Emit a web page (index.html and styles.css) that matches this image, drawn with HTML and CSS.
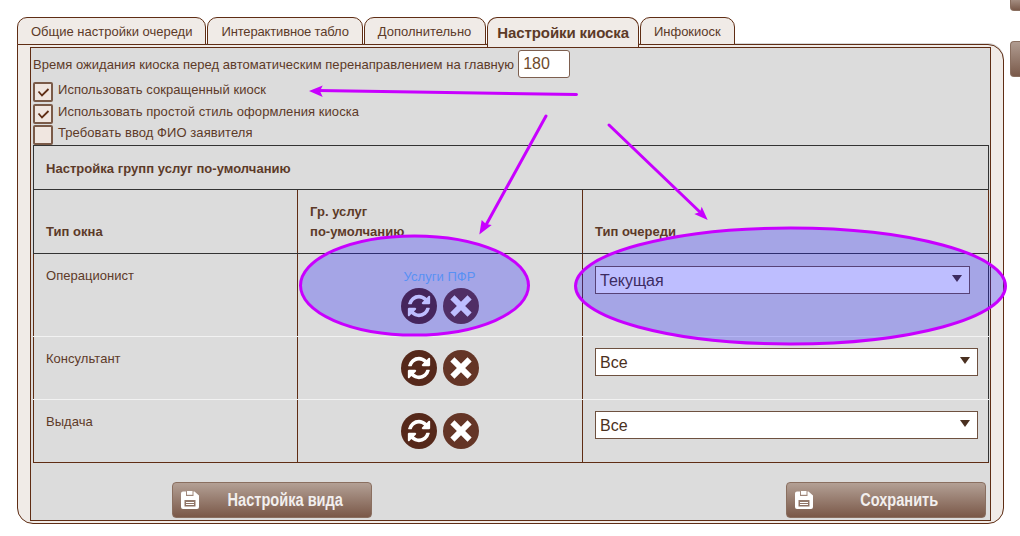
FILE: index.html
```html
<!DOCTYPE html>
<html lang="ru">
<head>
<meta charset="utf-8">
<title>Настройки киоска</title>
<link rel="stylesheet" href="styles.css">
</head>
<body>
<svg class="defs" width="0" height="0" aria-hidden="true">
  <symbol id="i-refresh" viewBox="0 0 1792 1792"><path d="M1639 1056q0 5-1 7-64 268-268 434.5t-478 166.5q-146 0-282.5-55t-243.5-157l-129 129q-19 19-45 19t-45-19-19-45v-448q0-26 19-45t45-19h448q26 0 45 19t19 45-19 45l-137 137q71 66 161 102t187 36q134 0 250-65t186-179q11-17 53-117 8-23 30-23h192q13 0 22.5 9.5t9.5 22.5zm25-800v448q0 26-19 45t-45 19h-448q-26 0-45-19t-19-45 19-45l138-138q-148-137-349-137-134 0-250 65t-186 179q-11 17-53 117-8 23-30 23h-199q-13 0-22.5-9.5t-9.5-22.5v-7q65-268 270-434.5t480-166.5q146 0 284 55.5t245 156.5l130-129q19-19 45-19t45 19 19 45z" fill="currentColor"/></symbol>
  <symbol id="i-close" viewBox="0 0 24 24"><path d="M4 7.100 7.100 4 12 8.900 16.900 4 20 7.100 15.100 12 20 16.900 16.900 20 12 15.100 7.100 20 4 16.900 8.900 12Z" fill="currentColor"/></symbol>
  <symbol id="i-save" viewBox="0 0 18 18"><path fill-rule="evenodd" d="M2 0.500h3v4.500h7.500V0.500h1L18 4.500V16a2 2 0 0 1-2 2H2a2 2 0 0 1-2-2V2.500a2 2 0 0 1 2-2ZM3.500 9v6.500h11V9ZM5 11h8v1H5Zm0 2h8v1H5Z" fill="currentColor"/><path d="M6 0h5.500v3.800H6Z" fill="currentColor"/></symbol>
</svg>

<div class="stub stub-a"></div>
<div class="stub stub-b"></div>

<main class="page">
  <nav class="tabs">
    <div class="tab">Общие настройки очереди</div>
    <div class="tab tab-tight">Интерактивное табло</div>
    <div class="tab tab-wide">Дополнительно</div>
    <div class="tab tab-active">Настройки киоска</div>
    <div class="tab">Инфокиоск</div>
  </nav>
  <section class="outer">
    <div class="inner">
      <div class="wait-row">
        <span>Время ожидания киоска перед автоматическим перенаправлением на главную</span>
        <span class="num-input">180</span>
      </div>
      <div class="check-row check-row-1"><span class="box"><svg viewBox="0 0 16 16"><path d="M3.500 7.500 7 11.500 13.500 5" fill="none" stroke="currentColor" stroke-width="1.800"/></svg></span><span>Использовать сокращенный киоск</span></div>
      <div class="check-row"><span class="box"><svg viewBox="0 0 16 16"><path d="M3.500 7.500 7 11.500 13.500 5" fill="none" stroke="currentColor" stroke-width="1.800"/></svg></span><span>Использовать простой стиль оформления киоска</span></div>
      <div class="check-row check-row-3"><span class="box"></span><span>Требовать ввод ФИО заявителя</span></div>

      <table class="grid">
        <colgroup><col class="c1"><col class="c2"><col class="c3"></colgroup>
        <thead>
          <tr class="title-row"><th colspan="3">Настройка групп услуг по-умолчанию</th></tr>
          <tr class="head-row">
            <th>Тип окна</th>
            <th>Гр. услуг<br>по-умолчанию</th>
            <th>Тип очереди</th>
          </tr>
        </thead>
        <tbody>
          <tr class="row-tall">
            <td>Операционист</td>
            <td class="mid">
              <div class="link">Услуги ПФР</div>
              <div class="icons">
                <span class="round"><svg class="ic-r"><use href="#i-refresh"/></svg></span>
                <span class="round lighter"><svg class="ic-x"><use href="#i-close"/></svg></span>
              </div>
            </td>
            <td class="sel-cell"><div class="select select-short"><span>Текущая</span><i class="caret"></i></div></td>
          </tr>
          <tr class="row">
            <td>Консультант</td>
            <td class="mid">
              <div class="icons">
                <span class="round"><svg class="ic-r"><use href="#i-refresh"/></svg></span>
                <span class="round lighter"><svg class="ic-x"><use href="#i-close"/></svg></span>
              </div>
            </td>
            <td class="sel-cell"><div class="select"><span>Все</span><i class="caret"></i></div></td>
          </tr>
          <tr class="row">
            <td>Выдача</td>
            <td class="mid">
              <div class="icons">
                <span class="round"><svg class="ic-r"><use href="#i-refresh"/></svg></span>
                <span class="round lighter"><svg class="ic-x"><use href="#i-close"/></svg></span>
              </div>
            </td>
            <td class="sel-cell"><div class="select"><span>Все</span><i class="caret"></i></div></td>
          </tr>
        </tbody>
      </table>

      <div class="actions">
        <button class="btn" type="button"><svg class="save"><use href="#i-save"/></svg><span class="btn-label"><span class="narrow">Настройка вида</span></span></button>
        <button class="btn" type="button"><svg class="save"><use href="#i-save"/></svg><span class="btn-label"><span class="narrow">Сохранить</span></span></button>
      </div>
    </div>
  </section>
</main>

<svg class="annot" viewBox="0 0 1020 536" aria-hidden="true">
  <ellipse class="oval" cx="414.500" cy="285.500" rx="114" ry="49.500"/>
  <ellipse class="oval" cx="790.500" cy="286" rx="215" ry="58"/>
  <path class="shaft" d="M576.500 94.500 318 90.500"/>
  <path class="shaft" d="M546 116 486 225"/>
  <path class="shaft" d="M609 125 702 214"/>
  <path class="head" d="M309 91 322.700 85.500 320 91 322.700 97Z"/>
  <path class="head" d="M479.300 234.500 481.700 220 486 224 491.700 225Z"/>
  <path class="head" d="M707.700 220 694.300 214 700 212 701.700 206.700Z"/>
</svg>
</body>
</html>
```
FILE: styles.css
```css
* { box-sizing: border-box; }
html, body { margin: 0; padding: 0; }
body {
  width: 1020px;
  height: 536px;
  overflow: hidden;
  background: #fff;
  font-family: "Liberation Sans", Arial, sans-serif;
  font-size: 13px;
  color: #5c3a28;
  position: relative;
}
.defs { position: absolute; }

.stub {
  position: absolute;
  left: 1010px;
  width: 10px;
  background: linear-gradient(#b09c91, #7a5a4a);
  border: 1px solid #8a6f60;
  border-right: 0;
  border-radius: 4px 0 0 4px;
}
.stub-a { top: -4px; height: 15px; }
.stub-b { top: 41px; height: 36px; }

.page { padding: 17px 0 0 17px; width: 987px; box-sizing: content-box; }

.tabs { display: flex; gap: 1px; height: 27px; position: relative; z-index: 1; }
.tab {
  height: 28px;
  padding: 6px 13px 0;
  border: 1px solid #5f2d14;
  border-radius: 10px 10px 0 0;
  background: #f0ebe7;
  white-space: nowrap;
}
.tab-tight { letter-spacing: -0.15px; }
.tab-wide { padding-right: 14px; }
.tab-active {
  height: 30px;
  font-size: 15px;
  font-weight: bold;
  letter-spacing: -0.1px;
  padding: 6px 9px 0;
  border-bottom: 0;
}

.outer {
  height: 480px;
  border: 1px solid #5f2d14;
  border-radius: 0 16px 16px 16px;
  background: #f0ebe7;
  padding: 2px 12px;
  box-shadow: 0 -1px 0 #d8d8d8;
}
.inner {
  height: 474px;
  background: #dcdcdc;
  border: 1px solid #5f2d14;
  padding: 2px 2px 0;
  display: flex;
  flex-direction: column;
  letter-spacing: 0.035px;
}

.wait-row { display: flex; align-items: center; gap: 4px; height: 28px; }
.num-input {
  width: 52px;
  height: 28px;
  background: #fff;
  border: 1px solid #7d5f4f;
  border-radius: 3px;
  font-size: 16px;
  line-height: 26px;
  padding-left: 4px;
  color: #6e4a2c;
}

.check-row { display: flex; align-items: flex-start; gap: 5px; height: 21px; letter-spacing: 0.07px; }
.check-row-1 { margin-top: 4px; height: 22px; }
.check-row-3 { height: 20px; }
.box {
  width: 20px;
  height: 20px;
  flex: none;
  border: 2px solid #7a5a48;
  border-radius: 2px;
  background: #f0e6e0;
  color: #5f2d14;
}
.box svg { display: block; width: 16px; height: 16px; }

.grid {
  width: 956px;
  border-collapse: collapse;
  table-layout: fixed;
  border: 1px solid #333;
}
.c1 { width: 264px; }
.c2 { width: 285px; }
.grid th, .grid td { padding: 0 12px; text-align: left; }
.grid th { font-weight: bold; }
.grid .title-row th { height: 44px; padding-top: 2px; border: 1px solid #333; }
.head-row th {
  height: 64px;
  line-height: 20px;
  vertical-align: bottom;
  border: 1px solid #333;
  border-right-color: #5f2d14;
}
.grid .head-row th { padding-bottom: 11px; }
.grid td {
  vertical-align: top;
  padding-top: 14px;
  border-left: 1px solid #5f2d14;
  border-bottom: 1px solid #f2f2f2;
}
.grid tr:last-child td { border-bottom: 1px solid #5f2d14; }
.row-tall { height: 83px; }
.row { height: 63px; }
.grid .mid { padding: 0; text-align: center; vertical-align: middle; }
.link { color: #70c0f0; margin: 3px 0 4px; padding-right: 1px; }
.icons { display: flex; justify-content: center; gap: 6px; padding-right: 1px; }
.round {
  width: 36px;
  height: 36px;
  border-radius: 50%;
  background: #55281a;
  color: #fff;
  display: flex;
  align-items: center;
  justify-content: center;
}
.round.lighter { background: #643526; }
.ic-r { width: 26px; height: 26px; }
.ic-x { width: 32px; height: 32px; }

.grid .sel-cell { padding: 12px 10px 0 12px; }
.select {
  height: 28px;
  background: #fff;
  border: 1px solid #6e5140;
  font-size: 16px;
  letter-spacing: 0;
  line-height: 25px;
  padding-left: 4px;
  display: flex;
  justify-content: space-between;
  align-items: center;
  color: #4a3020;
  margin-top: -1px;
}
.select-short { margin: 0 8px 0 0; }
.caret {
  width: 0;
  height: 0;
  border-left: 5px solid transparent;
  border-right: 5px solid transparent;
  border-top: 7px solid #4a3020;
  margin: -3px 7px 0 0;
}

.actions {
  display: flex;
  justify-content: space-between;
  padding: 19px 2px 0 139px;
}
.btn {
  width: 200px;
  height: 36px;
  border: 1px solid #8a6f60;
  border-radius: 4px;
  background: linear-gradient(#b3a095, #7a5848);
  color: #f2efee;
  font-family: "Liberation Sans", sans-serif;
  font-weight: bold;
  font-size: 18px;
  letter-spacing: 0;
  display: flex;
  align-items: center;
  padding: 0 0 0 8px;
}
.btn-label { flex: 1; text-align: center; }
.narrow { display: inline-block; transform: scaleX(0.81); }
.save { width: 18px; height: 18px; color: #fff; flex: none; }

.annot {
  position: absolute;
  left: 0;
  top: 0;
  width: 1020px;
  height: 536px;
  pointer-events: none;
}
.oval { fill: rgba(30, 30, 255, 0.29); stroke: #c800ff; stroke-width: 3; }
.shaft { fill: none; stroke: #c800ff; stroke-width: 3; stroke-linecap: round; }
.head { fill: #c800ff; }
```
